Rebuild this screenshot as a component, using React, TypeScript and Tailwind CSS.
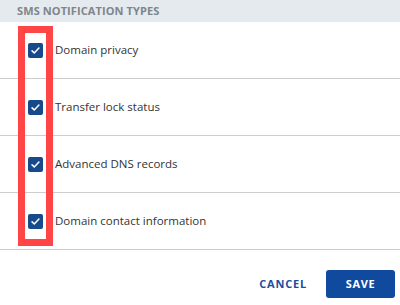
import React, { useState } from 'react';

const items = [
  'Domain privacy',
  'Transfer lock status',
  'Advanced DNS records',
  'Domain contact information',
];

const CheckIcon = () => (
  <svg viewBox="0 0 16 16" className="h-[11px] w-[11px]" fill="none" stroke="white" strokeWidth={2.2} strokeLinecap="round" strokeLinejoin="round">
    <path d="M3 8.5l3.2 3L13 4.5" />
  </svg>
);

export default function App() {
  const [checked, setChecked] = useState<boolean[]>([true, true, true, true]);

  const toggle = (i: number) => {
    setChecked(prev => prev.map((v, idx) => (idx === i ? !v : v)));
  };

  return (
    <div className="relative w-[400px] h-[305px] bg-white overflow-hidden" style={{ fontFamily: '"Open Sans", "Liberation Sans", sans-serif' }}>
      <div className="h-[22px] bg-[#e4eaee] flex items-center pl-[17px]">
        <span className="text-[11px] font-bold tracking-[0.1px] text-[#80858a] uppercase">SMS Notification Types</span>
      </div>

      <div>
        {items.map((label, i) => (
          <label key={label} className="h-[57px] border-b border-[#cdcdcd] flex items-center pl-[28px] gap-[12px] cursor-pointer">
            <input type="checkbox" className="sr-only" checked={checked[i]} onChange={() => toggle(i)} />
            <span className={`w-[15px] h-[15px] rounded-[2px] flex items-center justify-center ${checked[i] ? 'bg-[#174a8b]' : 'bg-white border border-gray-400'}`}>
              {checked[i] && <CheckIcon />}
            </span>
            <span className="text-[11.5px] text-[#333333]">{label}</span>
          </label>
        ))}
      </div>

      <div className="flex justify-end items-center gap-[19px] pt-[20px] pr-[5px]">
        <button className="text-[11px] font-bold tracking-[0.8px] text-[#1b4f9c]">CANCEL</button>
        <button className="w-[69px] h-[28px] rounded-[3px] bg-[#0f4a9e] text-white text-[11px] font-bold tracking-[0.6px]">SAVE</button>
      </div>

      <div className="absolute left-[18px] top-[26px] w-[35px] h-[220px] border-[7px] border-[#ff4545] pointer-events-none" />
    </div>
  );
}
